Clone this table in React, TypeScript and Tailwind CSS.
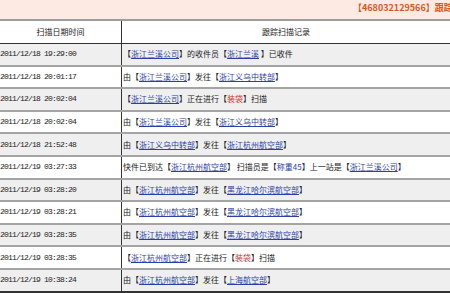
type Seg = string | { t: string; k: "link" | "red" | "blue" };

const L = (t: string): Seg => ({ t, k: "link" });
const R = (t: string): Seg => ({ t, k: "red" });
const B = (t: string): Seg => ({ t, k: "blue" });

const rows: { time: string; text: Seg[] }[] = [
  { time: "2011/12/18 19:29:00", text: ["【", L("浙江兰溪公司"), "】的收件员【", L("浙江兰溪"), " 】已收件"] },
  { time: "2011/12/18 20:01:17", text: ["由【", L("浙江兰溪公司"), "】发往【", L("浙江义乌中转部"), "】"] },
  { time: "2011/12/18 20:02:04", text: ["【", L("浙江兰溪公司"), "】正在进行【", R("装袋"), "】扫描"] },
  { time: "2011/12/18 20:02:04", text: ["由【", L("浙江兰溪公司"), "】发往【", L("浙江义乌中转部"), "】"] },
  { time: "2011/12/18 21:52:48", text: ["由【", L("浙江义乌中转部"), "】发往【", L("浙江杭州航空部"), "】"] },
  {
    time: "2011/12/19 03:27:33",
    text: ["快件已到达【", L("浙江杭州航空部"), "】 扫描员是【", B("称重45"), "】上一站是【", L("浙江兰溪公司"), "】"],
  },
  { time: "2011/12/19 03:28:20", text: ["由【", L("浙江杭州航空部"), "】发往【", L("黑龙江哈尔滨航空部"), "】"] },
  { time: "2011/12/19 03:28:21", text: ["由【", L("浙江杭州航空部"), "】发往【", L("黑龙江哈尔滨航空部"), "】"] },
  { time: "2011/12/19 03:28:35", text: ["由【", L("浙江杭州航空部"), "】发往【", L("黑龙江哈尔滨航空部"), "】"] },
  { time: "2011/12/19 03:28:35", text: ["【", L("浙江杭州航空部"), "】正在进行【", R("装袋"), "】扫描"] },
  { time: "2011/12/19 10:38:24", text: ["由【", L("浙江杭州航空部"), "】发往【", L("上海航空部"), "】"] },
];

function Segment({ s }: { s: Seg }) {
  if (typeof s === "string") return <span className="whitespace-pre">{s}</span>;
  if (s.k === "link") return <a className="text-[#2b3fa8] underline underline-offset-1">{s.t}</a>;
  if (s.k === "red") return <span className="text-[#d02a2a]">{s.t}</span>;
  return <span className="text-[#2b3fa8]">{s.t}</span>;
}

export default function App() {
  return (
    <div className="h-[293px] w-[450px] overflow-hidden bg-white text-[8px] text-[#222] [font-family:'Noto_Sans_CJK_SC',sans-serif]">
      {/* Title banner */}
      <div className="flex h-[21px] items-center overflow-hidden whitespace-nowrap border-b-2 border-[#9c9c9c] bg-[#fdeae2] pb-[3px] pl-[353px] text-[9px] font-bold text-[#d9581e]">
        【468032129566】跟踪扫描记录
      </div>

      {/* Header row */}
      <div className="flex h-[23px] border-b border-[#333]">
        <div className="flex w-[122px] shrink-0 items-center justify-center border-r border-[#333]">扫描日期时间</div>
        <div className="flex flex-1 items-center justify-center">跟踪扫描记录</div>
      </div>

      {rows.map((r, i) => (
        <div
          key={i}
          className={`flex h-[22.6px] border-b-2 ${i === rows.length - 1 ? "border-[#333]" : "border-[#a4a4a4]"} ${
            i % 2 === 0 ? "bg-[#efefef]" : "bg-white"
          }`}
        >
          <div className="flex w-[122px] shrink-0 items-center border-r border-[#333] tracking-[-0.8px] [font-family:'Liberation_Mono',monospace]">
            {r.time}
          </div>
          <div className="flex flex-1 items-center whitespace-nowrap pl-[1px]">
            {r.text.map((s, j) => (
              <Segment key={j} s={s} />
            ))}
          </div>
        </div>
      ))}
    </div>
  );
}
